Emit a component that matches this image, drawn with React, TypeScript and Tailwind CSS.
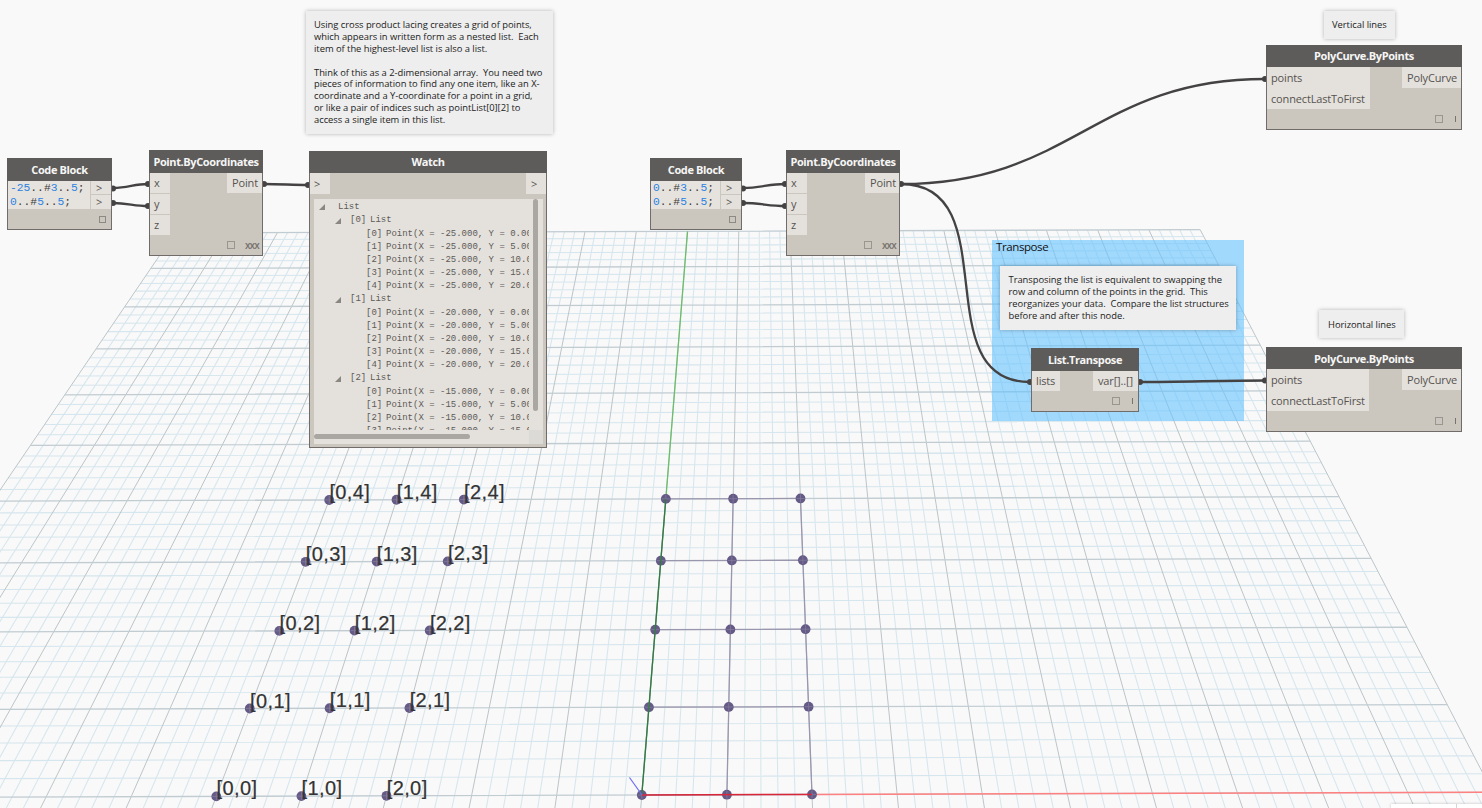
import React from "react";

/* ---------- perspective grid ---------- */
function project(x: number, y: number): [number, number] {
  const w = 1 + 0.0132 * y;
  return [(641.8 + 17.02 * x + 9.99 * y) / w, (795 - 0.055 * x - 8.22 * y) / w];
}

function segment(x1: number, y1: number, x2: number, y2: number) {
  const a = project(x1, y1);
  const b = project(x2, y2);
  return `M${a[0].toFixed(2)} ${a[1].toFixed(2)}L${b[0].toFixed(2)} ${b[1].toFixed(2)}`;
}

const NEAR = -3;
let minor = "";
let majorAcross = "";
let majorAlong = "";
for (let i = -50; i <= 50; i++) {
  if (i % 5 === 0) majorAlong += segment(i, NEAR, i, 50);
  else minor += segment(i, NEAR, i, 50);
}
for (let j = NEAR; j <= 50; j++) {
  if (j % 5 === 0) majorAcross += segment(-50, j, 50, j);
  else minor += segment(-50, j, 50, j);
}

const rows = [0, 5, 10, 15, 20];
const leftCols = [-25, -20, -15];
const rightCols = [0, 5, 10];

function Dot({ x, y }: { x: number; y: number }) {
  const [cx, cy] = project(x, y);
  return (
    <g>
      <circle cx={cx} cy={cy} r={4.9} fill="#655a85" />
      <path d={`M${cx - 4} ${cy}h8M${cx} ${cy - 4}v8`} stroke="#8f8aa8" strokeWidth={0.8} opacity={0.7} />
    </g>
  );
}

function Scene() {
  return (
    <svg className="absolute inset-0" width="1482" height="808" viewBox="0 0 1482 808">
      <path d={minor} stroke="#cde1eb" strokeWidth={1.05} fill="none" opacity={0.8} />
      <path d={majorAlong} stroke="#bcc5c9" strokeWidth={1} fill="none" />
      <path d={majorAcross} stroke="#c0ccd2" strokeWidth={1.3} fill="none" />
      {rows.map((r) => (
        <path key={r} d={segment(0, r, 10, r)} stroke="#9a96ae" strokeWidth={1.3} />
      ))}
      {rightCols.map((c) => (
        <path key={c} d={segment(c, 0, c, 20)} stroke="#9a96ae" strokeWidth={1.3} />
      ))}
      <path d={segment(0, 20, 0, 50)} stroke="#6cbd6c" strokeWidth={1.3} />
      <path d={segment(10, 0, 50, 0)} stroke="#ff8080" strokeWidth={1.4} />
      {leftCols.map((c) => rows.map((r) => <Dot key={`${c}/${r}`} x={c} y={r} />))}
      {rightCols.map((c) => rows.map((r) => <Dot key={`${c}/${r}`} x={c} y={r} />))}
      <path d={segment(0, 0, 0, 20)} stroke="#2e7d3c" strokeWidth={1.3} />
      <path d={segment(0, 0, 10, 0)} stroke="#d92638" strokeWidth={1.5} />
      <path d="M629.5 777.5L642 795" stroke="#6a6af5" strokeWidth={1.2} />
      <g
        fontFamily="'Liberation Sans', sans-serif"
        fontSize="20"
        letterSpacing="0.4"
        fill="#333333"
        stroke="#333333"
        strokeWidth="0.2"
      >
        {leftCols.map((c, i) =>
          rows.map((r, j) => {
            const [px, py] = project(c, r);
            return (
              <text key={`${c}.${r}`} x={px + 0.2} y={py - 0.9}>
                {`[${i},${j}]`}
              </text>
            );
          })
        )}
      </g>
    </svg>
  );
}

/* ---------- connectors ---------- */
const wires = [
  "M113 188C128 188 134 184 148 184",
  "M113 203C128 203 134 206 148 206",
  "M264 184C280 184 293 185 308 185",
  "M743 188C760 188 769 184 785 184",
  "M743 203C760 203 769 206 785 206",
  "M901 184C1072 184 1095 79 1265 79",
  "M901 184C1008 184 924 382 1030 382",
  "M1140 382C1180 382 1225 380.5 1265 380.5",
];
const ends: [number, number][] = [
  [113, 188.5], [113, 203], [148, 184], [148, 206], [264, 184], [308, 185],
  [743, 188.5], [743, 203], [785, 184], [785, 206], [901, 184], [1265, 79],
  [1030, 382], [1140, 382], [1265, 380.5],
];

function Wires() {
  return (
    <svg className="absolute inset-0" width="1482" height="808" viewBox="0 0 1482 808">
      {wires.map((d) => (
        <path key={d} d={d} stroke="#444242" strokeWidth={2.3} fill="none" />
      ))}
      {ends.map(([x, y]) => (
        <circle key={`${x},${y}`} cx={x} cy={y} r={3} fill="#444242" />
      ))}
    </svg>
  );
}

/* ---------- node parts ---------- */
function Node({ place, title, header = "h-[23px] pt-px", children }: { place: string; title: string; header?: string; children: React.ReactNode }) {
  return (
    <section className={`absolute flex flex-col border border-[#6f6c69] border-t-0 bg-[#cbc6be] ${place}`}>
      <h2 className={`-mx-px flex shrink-0 items-center justify-center whitespace-nowrap bg-[#5e5c5a] text-[11px] font-bold tracking-[-0.38px] text-[#f6f6f6] ${header}`}>
        {title}
      </h2>
      {children}
    </section>
  );
}

function Footer({ lacing, pad }: { lacing: string; pad: string }) {
  return (
    <div className={`absolute flex items-center ${pad}`}>
      <span className="size-[8px] border border-[#9a968f]" />
      <span className="text-[10px] font-semibold leading-none tracking-[-0.8px] text-[#77736f]">{lacing}</span>
    </div>
  );
}

function LongestFooter() {
  return (
    <div className="absolute right-[5px] bottom-[6px] flex items-center gap-[12px]">
      <span className="size-[8px] border border-[#9a968f]" />
      <span className="h-[6px] w-px bg-[#77736f]" />
    </div>
  );
}

function Port({ className, children }: { className: string; children: React.ReactNode }) {
  return (
    <div className={`flex items-center whitespace-nowrap bg-[#e4e1dc] text-[11px] leading-none tracking-[-0.15px] text-[#565350] ${className}`}>
      {children}
    </div>
  );
}

function Code({ text }: { text: string }) {
  return (
    <div className="h-[14px] whitespace-pre leading-[14px]">
      {text.split(/(-?\d+)/).map((t, i) => (
        <span key={i} className={/\d/.test(t) ? "text-[#2b82e0]" : "text-[#3d3b3a]"}>
          {t}
        </span>
      ))}
    </div>
  );
}

function CodeBlock({ place, lines, inset }: { place: string; lines: string[]; inset: string }) {
  return (
    <Node place={place} title="Code Block">
      <div className="flex h-7 bg-[#e6e3df]">
        <div className={`flex-1 font-['Liberation_Mono',monospace] text-[11.3px] ${inset}`}>
          {lines.map((l) => (
            <Code key={l} text={l} />
          ))}
        </div>
        <div className="flex w-[21px] flex-col gap-px border-l border-[#cbc6be] bg-[#cbc6be]">
          <Port className="flex-1 pl-[5px]">&gt;</Port>
          <Port className="flex-1 pb-px pl-[5px]">&gt;</Port>
        </div>
      </div>
      <span className="absolute right-[5px] bottom-[6px] size-[7px] border border-[#8d8984]" />
    </Node>
  );
}

function PointNode({ place, out }: { place: string; out: string }) {
  return (
    <Node place={place} title="Point.ByCoordinates">
      <div className="flex items-start justify-between">
        <div className="flex w-5 flex-col gap-px">
          <Port className="h-5 pb-px pl-1">x</Port>
          <Port className="h-5 pb-px pl-1">y</Port>
          <Port className="h-5 pb-px pl-1">z</Port>
        </div>
        <Port className={`h-5 pb-[2px] pl-[5px] ${out}`}>Point</Port>
      </div>
      <Footer lacing="xxx" pad="right-[3px] bottom-[5px] gap-[10px]" />
    </Node>
  );
}

function PolyCurve({ place, ins, header }: { place: string; ins: string; header: string }) {
  return (
    <Node place={place} title="PolyCurve.ByPoints" header={header}>
      <div className="flex items-start justify-between">
        <div className={ins}>
          <Port className="h-[21px] pl-1">points</Port>
          <Port className="h-[21px] pl-1">connectLastToFirst</Port>
        </div>
        <Port className="h-[21px] w-[59px] pl-[5px]">PolyCurve</Port>
      </div>
      <LongestFooter />
    </Node>
  );
}

function Note({ place, lines }: { place: string; lines: string[] }) {
  return (
    <div className={`absolute bg-[#eeeeee] text-[9.4px] tracking-[-0.03px] text-[#1c1c1c] shadow-[0_0_4px_rgba(0,0,0,0.28)] ${place}`}>
      {lines.map((l, i) => (
        <p key={i} className="h-[11.9px] whitespace-pre leading-[11.9px]">
          {l}
        </p>
      ))}
    </div>
  );
}

/* ---------- watch tree ---------- */
const Triangle = () => (
  <svg width="6" height="6" viewBox="0 0 6 6">
    <path d="M6 0V6H0Z" fill="#8a8783" />
  </svg>
);

const groups = [
  { x: "-25.000", h: "h-[13px]" },
  { x: "-20.000", h: "h-[13px]" },
  { x: "-15.000", h: "h-[13px]" },
];
const ys = ["0.000", "5.000", "10.000", "15.000", "20.000"];

function Watch() {
  return (
    <Node place="left-[309px] top-[151px] h-[297px] w-[238px]" title="Watch" header="h-[22px] pt-px">
      <div className="flex justify-between">
        <Port className="h-[21px] w-5 pl-1">&gt;</Port>
        <Port className="h-[21px] w-5 pl-[5px]">&gt;</Port>
      </div>
      <div className="mx-1 mt-[5px] flex h-[245px] w-[229px] flex-col bg-[#e4e1dc]">
        <div className="flex h-[231px]">
          <div className="w-[215px] overflow-hidden whitespace-pre pt-px font-['Liberation_Mono',monospace] text-[9px] leading-[13px] text-[#5d5a57]">
            <div className="flex h-[14px] items-center pl-[5px]">
              <Triangle />
              <span className="pl-[13px]">List</span>
            </div>
            {groups.map((g, i) => (
              <div key={g.x}>
                <div className={`flex items-center pl-[21px] ${g.h}`}>
                  <Triangle />
                  <span className="w-5 pl-[9px]">[{i}]</span>
                  <span className="pl-[9px]">List</span>
                </div>
                <div className="pt-px">
                  {ys.map((y, j) => (
                    <div key={y} className="flex h-[13px] pl-[52px]">
                      <span className="w-5 shrink-0">[{j}]</span>
                      <span>{`Point(X = ${g.x}, Y = ${y}, Z = 0.000)`}</span>
                    </div>
                  ))}
                </div>
              </div>
            ))}
          </div>
          <div className="w-[14px] pl-1">
            <div className="h-[212px] w-[5px] rounded-full bg-[#aaa7a2]" />
          </div>
        </div>
        <div className="flex h-[14px] items-center justify-between">
          <div className="mb-[2px] h-[5px] w-[156px] rounded-full bg-[#aaa7a2]" />
          <div className="h-[14px] w-[14px] bg-[#dcdad6]" />
        </div>
      </div>
    </Node>
  );
}

export default function App() {
  return (
    <main className="relative h-[808px] w-[1482px] overflow-hidden bg-[#f9f9f9] font-['Open_Sans','Noto_Sans',sans-serif]">
      <Scene />
      <div className="absolute left-[992px] top-[240px] h-[181px] w-[252px] bg-[rgba(101,195,255,0.6)] pl-[4px] text-[11.5px] leading-[13px] tracking-[-0.4px] text-[#111]">
        Transpose
      </div>
      <Wires />

      <Note
        place="left-[306px] top-[11px] h-[123px] w-[247px] pl-2 pt-[8px]"
        lines={[
          "Using cross product lacing creates a grid of points,",
          "which appears in written form as a nested list.  Each",
          "item of the highest-level list is also a list.",
          "",
          "Think of this as a 2-dimensional array.  You need two",
          "pieces of information to find any one item, like an X-",
          "coordinate and a Y-coordinate for a point in a grid,",
          "or like a pair of indices such as pointList[0][2] to",
          "access a single item in this list.",
        ]}
      />
      <Note
        place="left-[1000px] top-[266px] h-[64px] w-[236px] pl-[8.5px] pt-[8.4px]"
        lines={[
          "Transposing the list is equivalent to swapping the",
          "row and column of the points in the grid.  This",
          "reorganizes your data.  Compare the list structures",
          "before and after this node.",
        ]}
      />
      <Note place="left-[1324px] top-[11px] h-[28px] w-[71px] pl-2 pt-[8px]" lines={["Vertical lines"]} />
      <Note place="left-[1319px] top-[310px] h-[28px] w-[85px] pl-[9px] pt-[9px]" lines={["Horizontal lines"]} />

      <CodeBlock place="left-[7px] top-[158px] h-[72px] w-[105px]" lines={["-25..#3..5;", "0..#5..5;"]} inset="pl-[2px]" />
      <PointNode place="left-[149px] top-[150px] h-[106px] w-[114px]" out="w-[35px]" />
      <Watch />
      <CodeBlock place="left-[650px] top-[158px] h-[72px] w-[92px]" lines={["0..#3..5;", "0..#5..5;"]} inset="pl-[2px]" />
      <PointNode place="left-[786px] top-[150px] h-[106px] w-[114px]" out="w-[34px]" />
      <Node place="left-[1031px] top-[348px] h-[64px] w-[108px]" title="List.Transpose">
        <div className="flex justify-between">
          <Port className="h-5 w-7 pb-px pl-1">lists</Port>
          <Port className="h-5 w-[45px] pb-px pl-[5px]">var[]..[]</Port>
        </div>
        <LongestFooter />
      </Node>
      <PolyCurve place="left-[1266px] top-[45px] h-[85px] w-[196px]" ins="w-[103px]" header="h-[22px] pt-px" />
      <PolyCurve place="left-[1266px] top-[347px] h-[85px] w-[196px]" ins="w-[102px]" header="h-[22px] pt-[3px]" />

      <div className="absolute left-[1391px] top-[804px] flex h-1 w-[91px] bg-white shadow-[0_0_3px_rgba(0,0,0,0.25)]">
        <div className="w-[66px] border-r border-[#d5d5d5]" />
      </div>
    </main>
  );
}
